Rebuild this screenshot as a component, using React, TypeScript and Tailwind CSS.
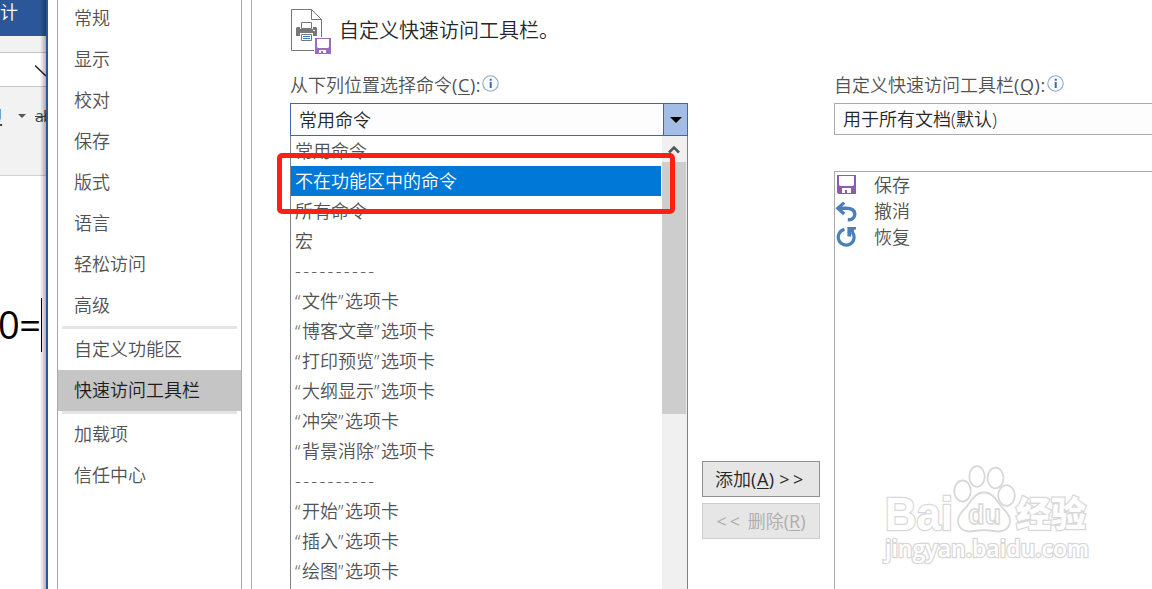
import React from 'react';

interface NavItemProps {
  label: string;
  active?: boolean;
}

const generalTabs = ['常规', '显示', '校对', '保存', '版式', '语言', '轻松访问', '高级'];

const commandSources = [
  '常用命令',
  '不在功能区中的命令',
  '所有命令',
  '宏',
  '----------',
  '“文件”选项卡',
  '“博客文章”选项卡',
  '“打印预览”选项卡',
  '“大纲显示”选项卡',
  '“冲突”选项卡',
  '“背景消除”选项卡',
  '----------',
  '“开始”选项卡',
  '“插入”选项卡',
  '“绘图”选项卡',
];

const SaveIcon: React.FC<{ size: number }> = ({ size }) => (
  <svg width={size} height={size} viewBox="0 0 19 19">
    <path fill="#8e5bb0" fillRule="evenodd" d="M0 0h19v19H1.5L0 17.5zM2 1v9l1 1h13l1-1V1zM5 13v5h3v-3h2v3h4v-5z" />
  </svg>
);

const UndoIcon: React.FC = () => (
  <svg width="23" height="20" viewBox="0 0 23 20" fill="none" stroke="#4a7fb8">
    <path d="M3 6.200h8c5.500 0 8.800 2.200 8.800 6 0 3.500-2.800 5.600-7 5.600" strokeWidth="3.4" />
    <path d="M9.2.6 2.8 6.3l6.400 5.700" strokeWidth="3.2" />
  </svg>
);

const RedoIcon: React.FC = () => (
  <svg width="21" height="20" viewBox="0 0 21 20">
    <path d="M8.500 2.400A7.900 7.900 0 1 0 16 4.800" fill="none" stroke="#4a7fb8" strokeWidth="3.2" />
    <path d="M11.4 0H20v2.2l-2.200.9.4 2.500-3-.4v4.500l-3.800-.500z" fill="#4a7fb8" />
  </svg>
);

const InfoIcon: React.FC = () => (
  <svg width="17" height="17" viewBox="0 0 17 17">
    <circle cx="8.5" cy="8.5" r="7.7" fill="#fbfcfe" stroke="#8ca9d3" strokeWidth="1.1" />
    <path d="M7.7 7h2v6h-2zM7.7 3.8h2v2h-2z" fill="#3f67aa" />
  </svg>
);

const PageIcon: React.FC = () => (
  <svg width="42" height="46" viewBox="0 0 42 46">
    <path d="M.5.5h20l10 10v31H.5z" fill="#fff" stroke="#777" />
    <path d="M20.5.5v10h10" fill="none" stroke="#777" />
    <path d="M6 18h19l1 1v8H5v-8z" fill="#777" />
    <path d="M9 17h13v3H9z" fill="#fff" />
    <path d="M10.5 13.5h10v6h-10z" fill="#fff" stroke="#777" />
    <path d="M9 24h13v4H9z" fill="#fff" />
    <path d="M10.5 25.500h10v6h-10z" fill="#fff" stroke="#777" />
    <path d="M12 27.5h7M12 29.500h7" stroke="#3c78b4" />
    <path d="M22 21.5h2" stroke="#fff" />
    <path d="M23 28h18v18h-18z" fill="#fff" />
    <path fill="#9b6bbd" fillRule="evenodd" d="M24 29h16v16H24zM26 30v8l1 1h10l1-1v-8zM28 41v3h2v-2h2v2h3v-3z" />
  </svg>
);

const NavItem: React.FC<NavItemProps> = ({ label, active }) => (
  <li className={`h-[41px] shrink-0 pl-4 leading-[41px] ${active ? 'bg-[#c5c5c5] text-[#1c1c1c]' : 'text-[#525252]'}`}>
    {label}
  </li>
);

const Divider: React.FC = () => <li className="mx-1 h-[3px] shrink-0 bg-[#e5e5e7]" />;

const WordWindow: React.FC = () => (
  <div className="relative flex w-[46px] shrink-0 flex-col overflow-hidden bg-white">
    <div className="h-9 shrink-0 bg-[#2b579a] text-lg leading-[25px] text-white">计</div>
    <div className="h-[17px] shrink-0 border-b border-[#c6c6c6] bg-[#f2f2f2]" />
    <div className="flex h-[34px] shrink-0 justify-end border-b border-[#c6c6c6]">
      <svg width="11" height="33" viewBox="0 0 11 33">
        <path d="M0 12.5 11 23" stroke="#222" strokeWidth="1.6" />
      </svg>
    </div>
    <div className="flex h-[89px] shrink-0 border-b border-[#d0d0d0] bg-[#f2f2f2] pt-[17px] text-[#444]">
      <span className="-ml-[13px] w-[15px] text-xl font-bold leading-6 underline">U</span>
      <svg className="ml-4 mt-[10px] shrink-0" width="8" height="5" viewBox="0 0 8 5">
        <path d="M0 0h8L4 4z" fill="#555" />
      </svg>
      <span className="ml-[9px] text-base font-normal leading-6 tracking-[-1px] line-through">ab</span>
    </div>
    <div className="flex pt-[122px]">
      <span className="-ml-[2px] w-[43px] whitespace-nowrap text-[38px] font-normal leading-[52px] tracking-[-0.5px] text-black">0=</span>
      <span className="h-[54px] w-px shrink-0 bg-black" />
    </div>
    <div className="absolute inset-y-0 right-0 w-[6px] bg-linear-to-r from-transparent to-black/30" />
  </div>
);

const Watermark: React.FC = () => (
  <svg className="absolute left-[880px] top-[460px]" width="215" height="110" viewBox="0 0 215 110" fill="#fff" stroke="#d8d8d8" strokeWidth="1.800">
    <g paintOrder="stroke" strokeWidth="2.6">
      <text x="5" y="70" fontSize="46" fontWeight="bold" fontFamily="Liberation Sans" textLength="68" lengthAdjust="spacingAndGlyphs">Bai</text>
      <text x="136" y="67" fontSize="35" fontWeight="900" fontFamily="Noto Sans CJK SC">经验</text>
      <text x="5" y="97" fontSize="23" fontWeight="600" fontFamily="Open Sans" textLength="204" lengthAdjust="spacingAndGlyphs">jingyan.baidu.com</text>
    </g>
    <ellipse cx="82.5" cy="31" rx="8.3" ry="10.5" />
    <ellipse cx="97" cy="16.5" rx="7.7" ry="10.3" />
    <ellipse cx="115.5" cy="18" rx="8" ry="10.3" />
    <ellipse cx="126.5" cy="35.5" rx="8.3" ry="10.3" />
    <path d="M104 32.5c7 0 11 5 15 11 5 7 11 10 11 17 0 7-5 11-12 11-5 0-9-1.500-14-1.500s-9 1.500-14 1.500c-7 0-12-4-12-11 0-7 6-10 11-17 4-6 8-11 15-11z" />
    <text x="88" y="64" fontSize="28" fontWeight="bold" fontFamily="Liberation Sans" textLength="33" lengthAdjust="spacingAndGlyphs" strokeWidth="1.500">du</text>
  </svg>
);

const SourceDropdown: React.FC = () => (
  <div className="relative">
    <div className="flex h-[33px] border border-[#3c68b2] bg-[#fdfdfd]">
      <div className="flex-1 pl-2 leading-[32px] text-[#262626]">常用命令</div>
      <div className="flex w-6 items-center justify-center border-l border-[#3c68b2] bg-[#a4bde4] pl-px">
        <svg width="12" height="6" viewBox="0 0 12 6">
          <path d="M0 0h12L6 6z" fill="#000" />
        </svg>
      </div>
    </div>
    <div className="flex h-[460px] border-x border-[#7e808e] bg-white">
      <ul className="flex-1 pr-px">
        {commandSources.map((source, i) => (
          <li
            key={i}
            className={`h-[30px] whitespace-nowrap pl-1 leading-[31px] ${i === 1 ? 'bg-[#0078d7] text-white' : 'text-[#525252]'} ${source.startsWith('-') ? 'tracking-[2.35px]' : ''}`}
          >
            {source.startsWith('“') ? (
              <>
                <span className="tracking-[1.6px]">“</span>
                {source.slice(1, source.indexOf('”'))}
                <span className="tracking-[1.6px]">”</span>
                {source.slice(source.indexOf('”') + 1)}
              </>
            ) : (
              source
            )}
          </li>
        ))}
      </ul>
      <div className="w-[25px] bg-[#f0f0f0] pr-px">
        <div className="flex h-[26px] items-center justify-center pt-px">
          <svg width="12" height="9" viewBox="0 0 12 9">
            <path d="M1 7.500 6 2.500l5 5" fill="none" stroke="#555" strokeWidth="2.500" />
          </svg>
        </div>
        <div className="h-[252px] bg-[#cdcdcd]" />
      </div>
    </div>
    {/* highlight around the option to pick */}
    <div className="absolute -left-[13px] top-[50px] h-[61px] w-[398px] rounded-[5px] border-[5px] border-[#ff2014]" />
  </div>
);

const App: React.FC = () => {
  return (
    <div className="relative flex h-[589px] w-[1152px] overflow-hidden bg-white font-['Open_Sans','Noto_Sans_CJK_SC',sans-serif] text-lg font-[350]">
      <WordWindow />
      <div className="w-[2px] shrink-0 bg-[#2b579a]" />

      <nav className="ml-[9px] mr-[9px] w-[185px] shrink-0 border-x border-[#ababab]">
        <ul className="-mt-[2px] flex flex-col">
          {generalTabs.map(tab => (
            <NavItem key={tab} label={tab} />
          ))}
          <Divider />
          <NavItem label="自定义功能区" />
          <NavItem label="快速访问工具栏" active />
          <Divider />
          <NavItem label="加载项" />
          <NavItem label="信任中心" />
        </ul>
      </nav>

      <main className="min-w-0 flex-1 border-l border-[#ababab] pl-[38px]">
        <header className="flex h-[70px] pl-px pt-[9px]">
          <PageIcon />
          <h1 className="ml-[6px] text-xl leading-[43px] text-[#262626]">自定义快速访问工具栏。</h1>
        </header>

        <div className="flex">
          <section className="w-[398px] shrink-0">
            <div className="flex h-[33px] leading-[31px] text-[#525252]">
              <span>从下列位置选择命令<span className="font-normal tracking-[0.6px]">(<u className="underline-offset-2">C</u>):</span></span>
              <span className="ml-px mt-[5px]"><InfoIcon /></span>
            </div>
            <SourceDropdown />
          </section>

          <section className="ml-[14px] mt-[391px] flex w-[118px] shrink-0 flex-col gap-[6px] text-center">
            <button className="h-9 whitespace-nowrap border border-[#8e8f8f] bg-[#e6e6e6] leading-[34px] text-[#262626]">
              添加<span className="font-normal tracking-[0.5px]">(<u className="underline-offset-2">A</u>)</span> <span className="font-normal tracking-[3.5px]">&gt;&gt;</span>
            </button>
            <button className="h-9 whitespace-nowrap border border-[#cdcdcd] bg-[#e6e6e6] leading-[34px] text-[#adadad]" disabled>
              <span className="font-normal tracking-[3px]">&lt;&lt;</span> 删除<span className="font-normal">(<u className="underline-offset-2">R</u>)</span>
            </button>
          </section>

          <section className="ml-[14px] w-[340px] shrink-0">
            <div className="flex h-[33px] leading-[31px] text-[#525252]">
              <span>自定义快速访问工具栏<span className="font-normal tracking-[0.6px]">(<u className="underline-offset-2">Q</u>):</span></span>
              <span className="ml-px mt-[5px]"><InfoIcon /></span>
            </div>
            <div className="h-8 border border-[#ababab] bg-[#fdfdfd] pl-2 leading-[31px] text-[#262626]">用于所有文档(默认)</div>
            <ul className="mt-9 h-[440px] border border-[#ababab] text-[#525252]">
              <li className="flex h-[26px] items-center pl-[2px]">
                <span className="w-[37px] pb-[2px]"><SaveIcon size={19} /></span>保存
              </li>
              <li className="flex h-[26px] items-center">
                <span className="w-[39px] pt-px"><UndoIcon /></span>撤消
              </li>
              <li className="flex h-[26px] items-center pl-px">
                <span className="w-[38px]"><RedoIcon /></span>恢复
              </li>
            </ul>
          </section>
        </div>
      </main>

      <Watermark />
    </div>
  );
};

export default App;
